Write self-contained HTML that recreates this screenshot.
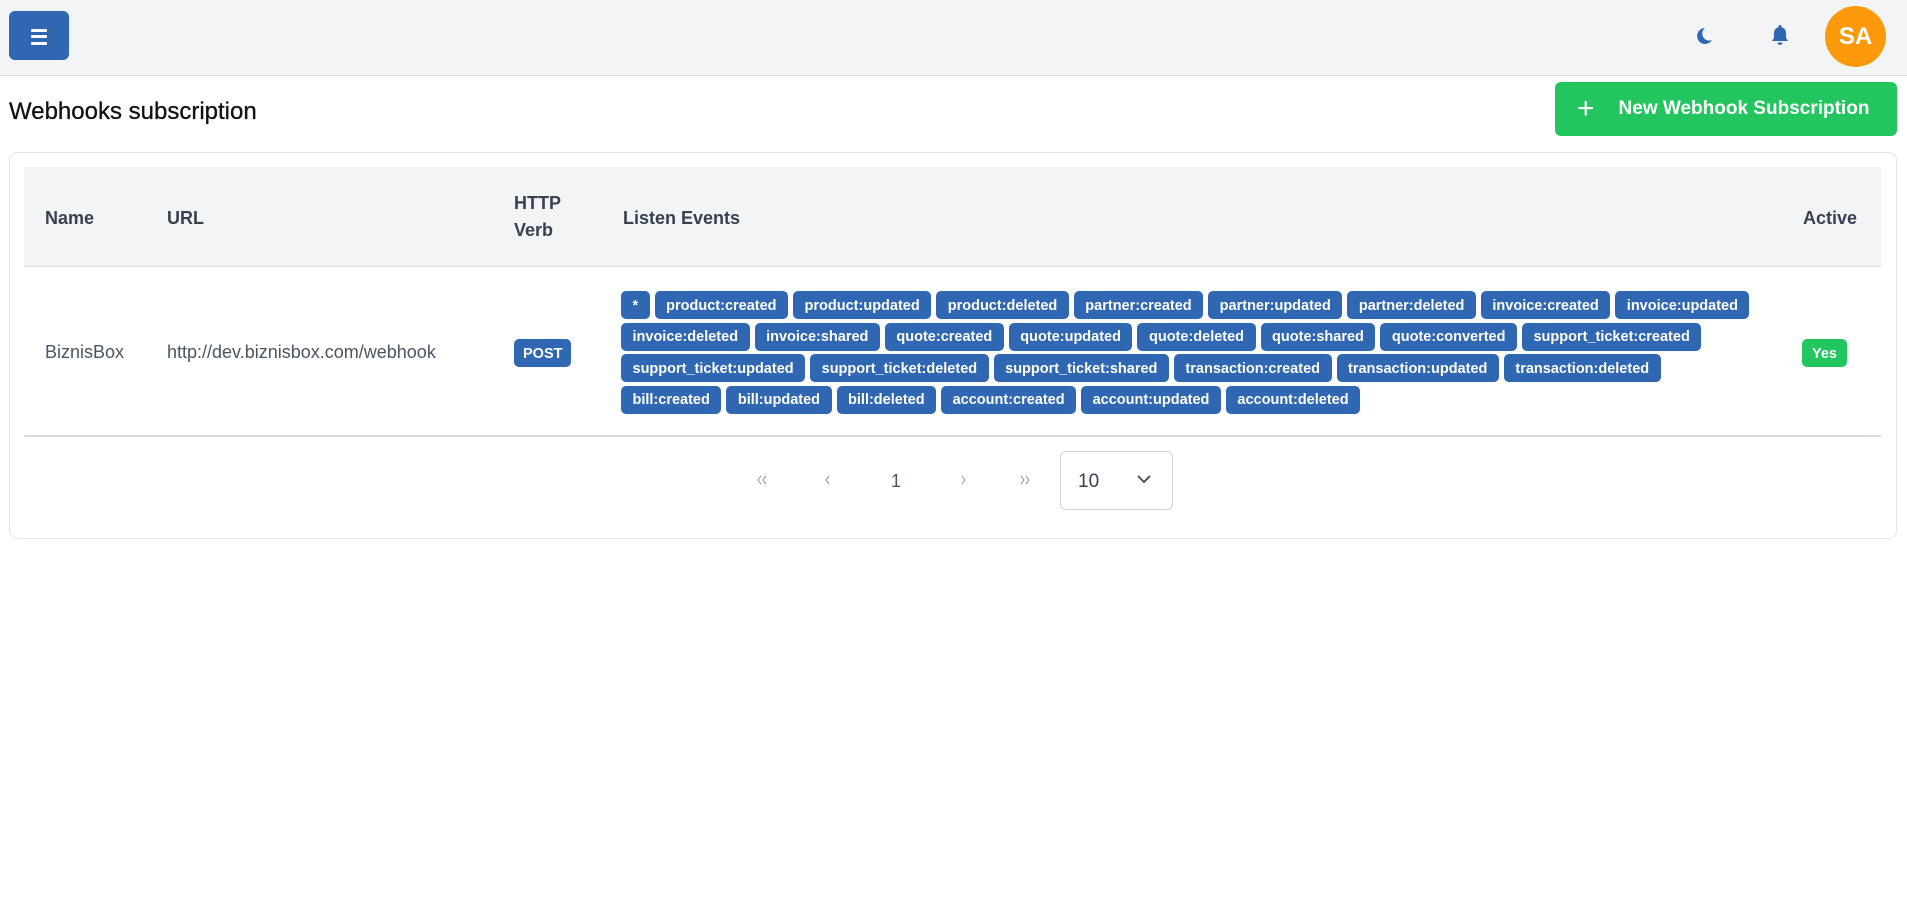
<!DOCTYPE html>
<html><head><meta charset="utf-8"><style>
*{box-sizing:border-box;margin:0;padding:0}
body{width:1907px;height:897px;background:#fff;font-family:"Liberation Sans",Arial,sans-serif;position:relative;overflow:hidden}
.hdr{position:absolute;left:0;top:0;width:1907px;height:76px;background:#f3f4f6;border-bottom:1.5px solid #d9dce1}
.ham{position:absolute;left:9px;top:11px;width:60px;height:49px;background:#2f67b2;border-radius:6px}
.ham i{position:absolute;left:22px;width:16px;height:3px;background:#fff;border-radius:1px}
.av{position:absolute;left:1825px;top:6px;width:61px;height:61px;border-radius:50%;background:#fd9a0c;color:#fff;font-weight:bold;font-size:24px;display:flex;align-items:center;justify-content:center}
.title{position:absolute;left:9px;top:98px;font-size:24px;color:#111;-webkit-text-stroke:0.3px #111}
.btn{position:absolute;left:1555px;top:82px;width:342px;height:54px;background:#22c55e;border-radius:6px;color:#fff;font-weight:bold;font-size:19px;display:flex;align-items:center}
.card{position:absolute;left:9px;top:152px;width:1888px;height:387px;border:1px solid #e3e5e9;border-radius:8px}
.th{position:absolute;left:24px;top:167px;width:1857px;height:100px;background:#f3f4f6;border-bottom:1.5px solid #d9dce1}
.h{position:absolute;font-weight:bold;font-size:18px;color:#374151;line-height:27px}
.row{position:absolute;left:24px;top:435px;width:1857px;height:1.5px;background:#d9dce1}
.c{position:absolute;font-size:18px;color:#4b5563;top:342px}
.b{display:inline-flex;align-items:center;background:#2f67b2;color:#fff;font-weight:bold;font-size:14.5px;height:28px;padding:1px 11.5px 0;border-radius:5px;margin-right:5px;white-space:nowrap}
.tags{position:absolute;left:621px;top:291px}
.tr{display:flex;height:31.6px}
.sel{position:absolute;left:1060px;top:451px;width:113px;height:59px;border:1px solid #cfd3d9;border-radius:6px}
</style></head><body>
<div class="hdr">
<div class="ham"><i style="top:18px"></i><i style="top:24px"></i><i style="top:31px"></i></div>
<svg style="position:absolute;left:1695px;top:27px" width="19" height="18" viewBox="0 0 19 18"><path d="M10 1 A8 8 0 1 0 17 13 A7 7 0 0 1 10 1Z" fill="#2f67b2"/></svg>
<svg style="position:absolute;left:1770px;top:24px" width="20" height="22" viewBox="0 0 20 22"><path d="M10 1a1.5 1.5 0 0 1 1.5 1.5v.6A6 6 0 0 1 16 9v5l2 3H2l2-3V9a6 6 0 0 1 4.5-5.9v-.6A1.5 1.5 0 0 1 10 1z" fill="#2f67b2"/><path d="M7.5 18.5h5a2.5 2.5 0 0 1-5 0z" fill="#2f67b2"/></svg>
<div class="av">SA</div>
</div>
<div class="title">Webhooks subscription</div>
<div class="btn"><span style="font-weight:normal;font-size:30px;margin-left:22px;margin-right:24px;line-height:1">+</span>New Webhook Subscription</div>
<div class="card"></div>
<div class="th"></div>
<div class="h" style="left:45px;top:205px">Name</div>
<div class="h" style="left:167px;top:205px">URL</div>
<div class="h" style="left:514px;top:190px">HTTP<br>Verb</div>
<div class="h" style="left:623px;top:205px">Listen Events</div>
<div class="h" style="left:1803px;top:205px">Active</div>
<div class="c" style="left:45px">BiznisBox</div>
<div class="c" style="left:167px">http://dev.biznisbox.com/webhook</div>
<div style="position:absolute;left:514px;top:339px"><span class="b" style="padding:1px 9px 0">POST</span></div>
<div class="tags">
<div class="tr"><span class="b">*</span><span class="b">product:created</span><span class="b">product:updated</span><span class="b">product:deleted</span><span class="b">partner:created</span><span class="b">partner:updated</span><span class="b">partner:deleted</span><span class="b">invoice:created</span><span class="b">invoice:updated</span></div>
<div class="tr"><span class="b">invoice:deleted</span><span class="b">invoice:shared</span><span class="b">quote:created</span><span class="b">quote:updated</span><span class="b">quote:deleted</span><span class="b">quote:shared</span><span class="b">quote:converted</span><span class="b">support_ticket:created</span></div>
<div class="tr"><span class="b">support_ticket:updated</span><span class="b">support_ticket:deleted</span><span class="b">support_ticket:shared</span><span class="b">transaction:created</span><span class="b">transaction:updated</span><span class="b">transaction:deleted</span></div>
<div class="tr"><span class="b">bill:created</span><span class="b">bill:updated</span><span class="b">bill:deleted</span><span class="b">account:created</span><span class="b">account:updated</span><span class="b">account:deleted</span></div>
</div>
<div style="position:absolute;left:1802px;top:339px"><span class="b" style="background:#22c55e;padding:1px 10px 0">Yes</span></div>
<div class="row"></div>
<svg style="position:absolute;left:757px;top:475px" width="100" height="10" viewBox="0 0 100 10"><g stroke="#9ca3af" stroke-width="1.2" fill="none"><path d="M4 1L1 5l3 4M9 1L6 5l3 4"/><path d="M72 1l-3 4 3 4"/></g></svg>
<div style="position:absolute;left:891px;top:471px;font-size:18px;color:#4b5563">1</div>
<svg style="position:absolute;left:958px;top:475px" width="80" height="10" viewBox="0 0 80 10"><g stroke="#9ca3af" stroke-width="1.2" fill="none"><path d="M4 1l3 4-3 4"/><path d="M63 1l3 4-3 4M68 1l3 4-3 4"/></g></svg>
<div class="sel"><span style="position:absolute;left:17px;top:19px;font-size:19px;color:#374151">10</span>
<svg style="position:absolute;left:75px;top:22px" width="16" height="10" viewBox="0 0 16 10"><path d="M2 2l6 6 6-6" stroke="#4b5563" stroke-width="2" fill="none"/></svg></div>
</body></html>
